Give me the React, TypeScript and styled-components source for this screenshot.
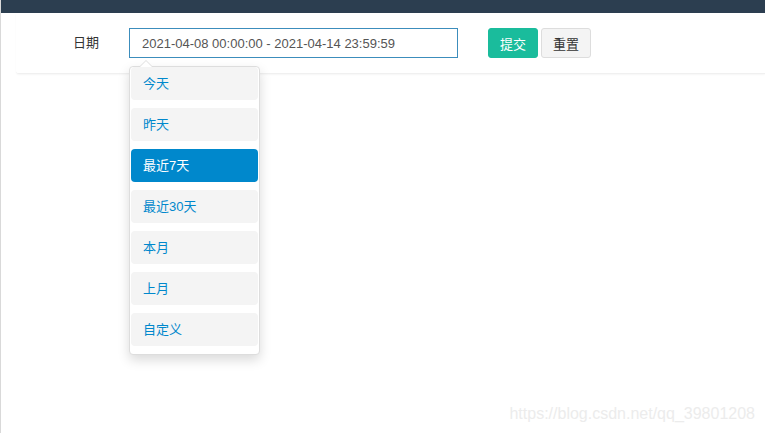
import React, { useState } from 'react';
import styled, { createGlobalStyle } from 'styled-components';

const GlobalStyle = createGlobalStyle`
    html, body {
        margin: 0;
        padding: 0;
        background: #fff;
        font-family: "Liberation Sans", "Noto Sans CJK SC", sans-serif;
        font-size: 13px;
        color: #333;
    }
`;

const Page = styled.div`
    position: relative;
    width: 765px;
    height: 433px;
    overflow: hidden;
    border-left: 1px solid #d9d9d9;
    box-sizing: border-box;
`;

const TopBar = styled.div`
    height: 13px;
    background: #2c3e50;
    margin-left: -1px;
`;

const Card = styled.div`
    margin-left: 15px;
    height: 61px;
    box-sizing: border-box;
    padding-top: 15px;
    border-bottom: 1px solid #f0f0f0;
    border-radius: 0 0 0 3px;
    box-shadow: 0 1px 2px rgba(0, 0, 0, 0.04);
`;

const FormRow = styled.div`
    display: flex;
    align-items: flex-start;
    position: relative;
`;

const Label = styled.label`
    width: 113px;
    height: 30px;
    line-height: 30px;
    box-sizing: border-box;
    padding-right: 30px;
    text-align: right;
    color: #333;
`;

const Field = styled.div`
    position: relative;
`;

const DateInput = styled.div`
    width: 329px;
    height: 30px;
    box-sizing: border-box;
    border: 1px solid #3c8dbc;
    padding-left: 12px;
    display: flex;
    align-items: center;
    color: #555;
`;

const Btn = styled.button<{ $primary?: boolean }>`
    height: 30px;
    padding: 0 11px;
    margin-left: ${(p) => (p.$primary ? '30px' : '3px')};
    font-family: inherit;
    font-size: 13px;
    border-radius: 3px;
    border: 1px solid ${(p) => (p.$primary ? '#1abc9c' : '#ddd')};
    background: ${(p) => (p.$primary ? '#1abc9c' : '#f4f4f4')};
    color: ${(p) => (p.$primary ? '#fff' : '#333')};
`;

const Dropdown = styled.div`
    position: absolute;
    top: 38px;
    left: 0;
    width: 131px;
    box-sizing: border-box;
    padding: 0 1px 8px;
    background: #fff;
    border: 1px solid #ddd;
    border-radius: 4px;
    box-shadow: 0 5px 12px rgba(0, 0, 0, 0.15);
    display: flex;
    flex-direction: column;
    gap: 8px;
    z-index: 2;

    &::before {
        content: '';
        position: absolute;
        top: -7px;
        left: 9px;
        border: 7px solid transparent;
        border-top: 0;
        border-bottom-color: #ddd;
    }
    &::after {
        content: '';
        position: absolute;
        top: -6px;
        left: 10px;
        border: 6px solid transparent;
        border-top: 0;
        border-bottom-color: #fff;
    }
`;

const Range = styled.div<{ $active?: boolean }>`
    height: 33px;
    line-height: 33px;
    padding-left: 12px;
    border-radius: 4px;
    background: ${(p) => (p.$active ? '#0088cc' : '#f4f4f4')};
    color: ${(p) => (p.$active ? '#fff' : '#0088cc')};
    cursor: pointer;
`;

const Watermark = styled.div`
    position: absolute;
    right: 10px;
    bottom: 10px;
    font-family: "Liberation Sans", sans-serif;
    font-size: 16px;
    color: #ececec;
`;

const ranges = ['今天', '昨天', '最近7天', '最近30天', '本月', '上月', '自定义'];

const App: React.FC = () => {
    const [active, setActive] = useState('最近7天');

    return (
        <Page>
            <GlobalStyle />
            <TopBar />
            <Card>
                <FormRow>
                    <Label>日期</Label>
                    <Field>
                        <DateInput>2021-04-08 00:00:00 - 2021-04-14 23:59:59</DateInput>
                        <Dropdown>
                            {ranges.map((r) => (
                                <Range key={r} $active={r === active} onClick={() => setActive(r)}>
                                    {r}
                                </Range>
                            ))}
                        </Dropdown>
                    </Field>
                    <Btn $primary>提交</Btn>
                    <Btn>重置</Btn>
                </FormRow>
            </Card>
            <Watermark>https://blog.csdn.net/qq_39801208</Watermark>
        </Page>
    );
};

export default App;
